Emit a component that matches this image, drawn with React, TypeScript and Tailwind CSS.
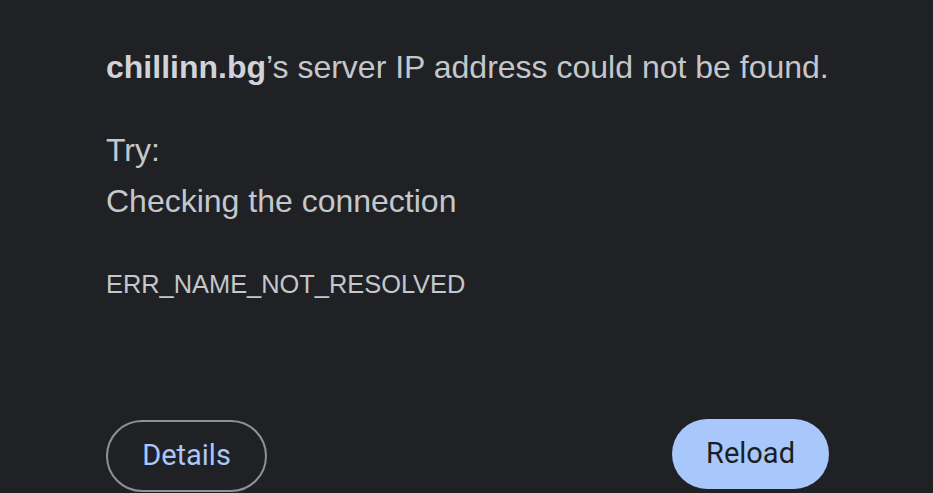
import React from "react";

const App: React.FC = () => {
  return (
    <div className="h-[493px] w-full overflow-hidden bg-[#202124] pl-[106px] pr-[104px] font-['Liberation_Sans',Arial,sans-serif] text-[#c4c7cb]">
      {/* Main message */}
      <h1 className="pt-[47px] text-[32px] font-normal leading-[40px]">
        <span className="font-bold text-[#d0d3d7]">chillinn.bg</span>’s server IP address could not be found.
      </h1>

      {/* Suggestions */}
      <p className="mt-[43px] text-[32px] leading-[40px]">Try:</p>
      <p className="mt-[11px] text-[32px] leading-[40px]">Checking the connection</p>

      {/* Error code */}
      <p className="mt-[47px] text-[25.4px] leading-[32px]">ERR_NAME_NOT_RESOLVED</p>

      {/* Actions */}
      <div className="mt-[120px] flex items-start justify-between">
        <button className="flex h-[72px] w-[161px] items-center justify-center rounded-full border-2 border-[#8e9196] font-['Roboto',sans-serif] text-[29px] text-[#a8c7fa]">
          Details
        </button>
        <button className="-mt-px flex h-[70px] w-[157px] items-center justify-center rounded-full bg-[#a8c7fa] font-['Roboto',sans-serif] text-[29px] text-[#1b1f26]">
          Reload
        </button>
      </div>
    </div>
  );
};

export default App;
